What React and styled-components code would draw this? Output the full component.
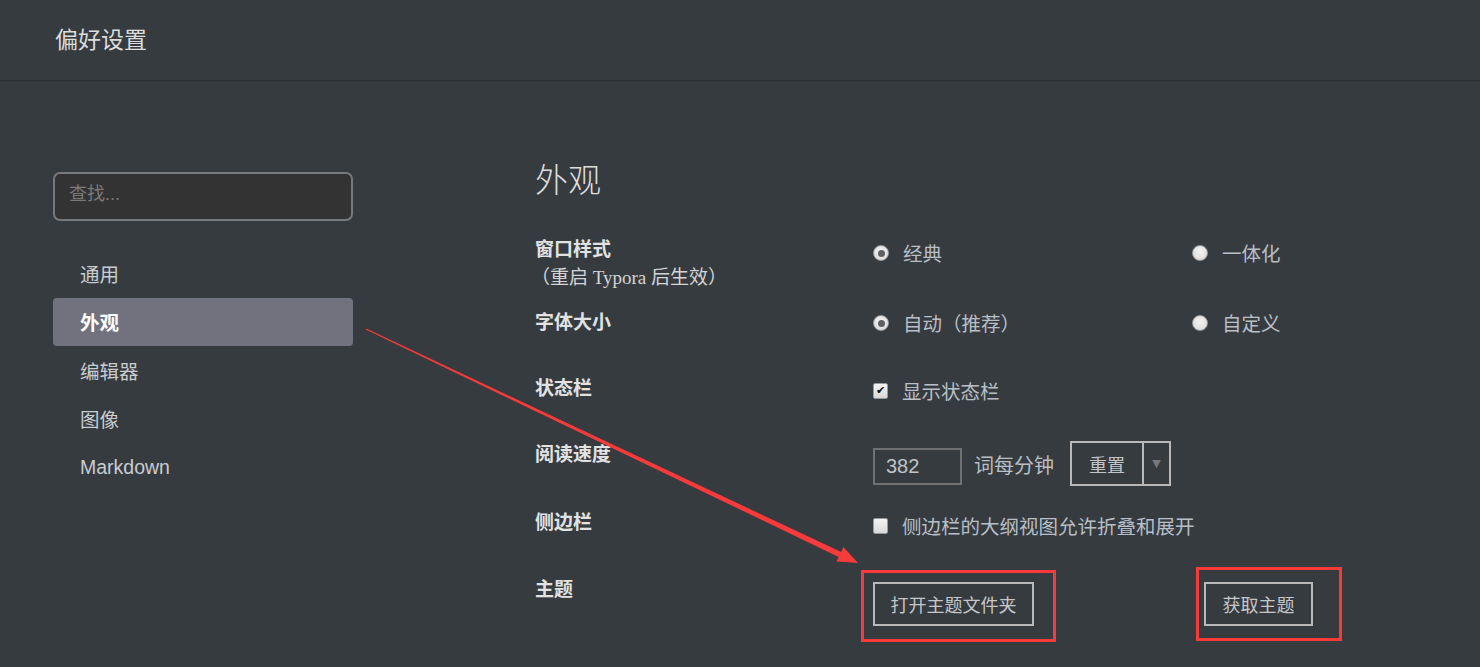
import React from "react";
import styled, { createGlobalStyle } from "styled-components";

const navItems = ["通用", "外观", "编辑器", "图像", "Markdown"];

function Radio({ checked, children }) {
  return (
    <Option>
      <RadioDot $checked={checked} />
      <span>{children}</span>
    </Option>
  );
}

function Check({ checked, children }) {
  return (
    <Option>
      <CheckBox $checked={checked}>{checked ? "✔" : ""}</CheckBox>
      <span>{children}</span>
    </Option>
  );
}

function App() {
  return (
    <Page>
      <GlobalStyle />
      <Header>
        <h1>偏好设置</h1>
      </Header>
      <Body>
        <Sidebar>
          <Search placeholder="查找..." />
          <NavList>
            {navItems.map((item) => (
              <NavItem key={item} $active={item === "外观"}>
                {item}
              </NavItem>
            ))}
          </NavList>
        </Sidebar>
        <Main>
          <Heading>外观</Heading>
          <Row $h={73}>
            <Label>
              窗口样式
              <small>（重启 Typora 后生效）</small>
            </Label>
            <Cell $top={5}>
              <Radio checked>经典</Radio>
            </Cell>
            <Cell $top={5}>
              <Radio>一体化</Radio>
            </Cell>
          </Row>
          <Row $h={66}>
            <Label>字体大小</Label>
            <Cell $top={2}>
              <Radio checked>自动（推荐）</Radio>
            </Cell>
            <Cell $top={2}>
              <Radio>自定义</Radio>
            </Cell>
          </Row>
          <Row $h={66}>
            <Label>状态栏</Label>
            <Cell $top={4}>
              <Check checked>显示状态栏</Check>
            </Cell>
          </Row>
          <Row $h={68}>
            <Label>阅读速度</Label>
            <Cell $wide>
              <SpeedGroup>
                <NumberInput defaultValue="382" />
                <Unit>词每分钟</Unit>
                <SplitButton>
                  <span>重置</span>
                  <Caret>▼</Caret>
                </SplitButton>
              </SpeedGroup>
            </Cell>
          </Row>
          <Row $h={67}>
            <Label>侧边栏</Label>
            <Cell $wide $top={5}>
              <Check>侧边栏的大纲视图允许折叠和展开</Check>
            </Cell>
          </Row>
          <Row $h={70}>
            <Label>主题</Label>
            <Cell $top={6}>
              <Button $w={161}>打开主题文件夹</Button>
            </Cell>
            <Cell $top={6}>
              <Button $w={109} $ml={12}>
                获取主题
              </Button>
            </Cell>
          </Row>
        </Main>
      </Body>

      <Annotations>
        <svg width="1480" height="667" viewBox="0 0 1480 667">
          <polygon
            fill="#f83a3a"
            points="365.7,329.5 366.3,328.5 841.2,552 843.4,547 858,563 836.5,561.6 838.6,556.9"
          />
        </svg>
        <RedBox $x={861} $y={570} $w={195} $h={72} />
        <RedBox $x={1196} $y={567} $w={146} $h={74} />
      </Annotations>
    </Page>
  );
}

const GlobalStyle = createGlobalStyle`
  body {
    margin: 0;
    background: #363b40;
    font-family: "Noto Sans CJK SC", "Liberation Sans", sans-serif;
    color: #b8bfc6;
  }
`;

const Page = styled.div`
  position: relative;
  width: 1480px;
  height: 667px;
  overflow: hidden;
  background: #363b40;
`;

const Header = styled.header`
  height: 80px;
  border-bottom: 1px solid #2c3034;
  box-shadow: 0 1px 1px rgba(0, 0, 0, 0.08);
  display: flex;
  align-items: center;
  padding-left: 55px;
  h1 {
    margin: 0;
    font-size: 23px;
    font-weight: 400;
    color: #dcdcdc;
    line-height: 1;
    padding-bottom: 4px;
  }
`;

const Body = styled.div`
  display: flex;
  padding: 79px 0 0 53px;
`;

const Sidebar = styled.aside`
  width: 300px;
  margin-top: 12px;
  display: flex;
  flex-direction: column;
  gap: 28px;
`;

const Search = styled.input`
  box-sizing: border-box;
  width: 300px;
  height: 49px;
  border: 2px solid #77797c;
  border-radius: 7px;
  background: #333333;
  padding: 0 14px 4px;
  font-family: "Liberation Sans", "Noto Sans CJK SC", sans-serif;
  font-size: 18px;
  color: #ccc;
  outline: none;
  &::placeholder {
    color: #7a7a7a;
  }
`;

const NavList = styled.ul`
  list-style: none;
  margin: 0;
  padding: 0;
`;

const NavItem = styled.li`
  height: 48.5px;
  display: flex;
  align-items: center;
  padding-left: 27px;
  border-radius: 4px;
  font-family: "Liberation Sans", "Noto Sans CJK SC", sans-serif;
  font-size: 19.5px;
  color: ${(p) => (p.$active ? "#ffffff" : "#c9ccd0")};
  background: ${(p) => (p.$active ? "#72727e" : "transparent")};
  font-weight: ${(p) => (p.$active ? 700 : 400)};
`;

const Main = styled.main`
  margin-left: 182px;
  display: flex;
  flex-direction: column;
`;

const Heading = styled.h2`
  margin: -2px 0 38px;
  height: 40px;
  line-height: 40px;
  font-size: 33px;
  font-weight: 300;
  color: #dddddd;
`;

const Row = styled.div`
  display: grid;
  grid-template-columns: 338px 319px 200px;
  align-items: start;
  height: ${(p) => p.$h}px;
`;

const Label = styled.div`
  font-size: 19px;
  font-weight: 700;
  line-height: 24px;
  color: #e2e2e2;
  small {
    display: block;
    margin-top: 6px;
    font-size: 19px;
    font-weight: 400;
    color: #d4d4d4;
    font-family: "Liberation Serif", "Noto Sans CJK SC", serif;
    margin-left: -4px;
  }
`;

const Cell = styled.div`
  padding-top: ${(p) => p.$top || 0}px;
  grid-column: ${(p) => (p.$wide ? "2 / 4" : "auto")};
`;

const Option = styled.label`
  display: flex;
  align-items: center;
  gap: 14px;
  font-size: 19.5px;
  line-height: 24px;
  color: #b8bfc6;
`;

const RadioDot = styled.span`
  box-sizing: border-box;
  width: 16px;
  height: 16px;
  border-radius: 50%;
  background: radial-gradient(circle at 50% 40%, #f4f4f4, #d6d6d6);
  border: 1px solid #9a9a9a;
  display: flex;
  align-items: center;
  justify-content: center;
  &::after {
    content: "";
    width: 7px;
    height: 7px;
    border-radius: 50%;
    background: ${(p) => (p.$checked ? "#5f5f5f" : "transparent")};
  }
`;

const CheckBox = styled.span`
  box-sizing: border-box;
  width: 15px;
  height: 16px;
  border-radius: 2px;
  background: linear-gradient(#f4f4f4, #d9d9d9);
  border: 1px solid #9a9a9a;
  font-size: 11px;
  line-height: 14px;
  text-align: center;
  color: #111;
  font-family: "DejaVu Sans", sans-serif;
`;

const SpeedGroup = styled.div`
  display: flex;
  align-items: center;
`;

const NumberInput = styled.input`
  box-sizing: border-box;
  width: 89px;
  height: 37px;
  margin-top: 5px;
  border: 2px solid #6f7173;
  background: transparent;
  padding: 0 11px;
  font-family: "Liberation Sans", sans-serif;
  font-size: 20px;
  color: #bfc3c7;
  outline: none;
`;

const Unit = styled.span`
  margin: 1px 0 0 12px;
  font-size: 20px;
  color: #b8bfc6;
`;

const SplitButton = styled.div`
  box-sizing: border-box;
  margin-left: 16px;
  height: 45px;
  display: flex;
  border: 2px solid #b9b9b9;
  span {
    width: 70px;
    display: flex;
    align-items: center;
    justify-content: center;
    font-size: 18px;
    color: #c4c7ca;
    border-right: 2px solid #b9b9b9;
  }
`;

const Caret = styled.i`
  width: 25px;
  display: flex;
  align-items: center;
  justify-content: center;
  font-style: normal;
  font-size: 11px;
  color: #77797c;
  font-family: "DejaVu Sans", sans-serif;
`;

const Button = styled.button`
  box-sizing: border-box;
  width: ${(p) => p.$w}px;
  height: 44px;
  margin-left: ${(p) => p.$ml || 0}px;
  border: 2px solid #b9b9b9;
  background: transparent;
  font-family: "Noto Sans CJK SC", sans-serif;
  font-size: 18px;
  color: #c4c7ca;
  padding: 0;
`;

const Annotations = styled.div`
  position: absolute;
  inset: 0;
  pointer-events: none;
  svg {
    position: absolute;
    left: 0;
    top: 0;
  }
`;

const RedBox = styled.div`
  position: absolute;
  box-sizing: border-box;
  left: ${(p) => p.$x}px;
  top: ${(p) => p.$y}px;
  width: ${(p) => p.$w}px;
  height: ${(p) => p.$h}px;
  border: 3px solid #f83a3a;
`;

export default App;
